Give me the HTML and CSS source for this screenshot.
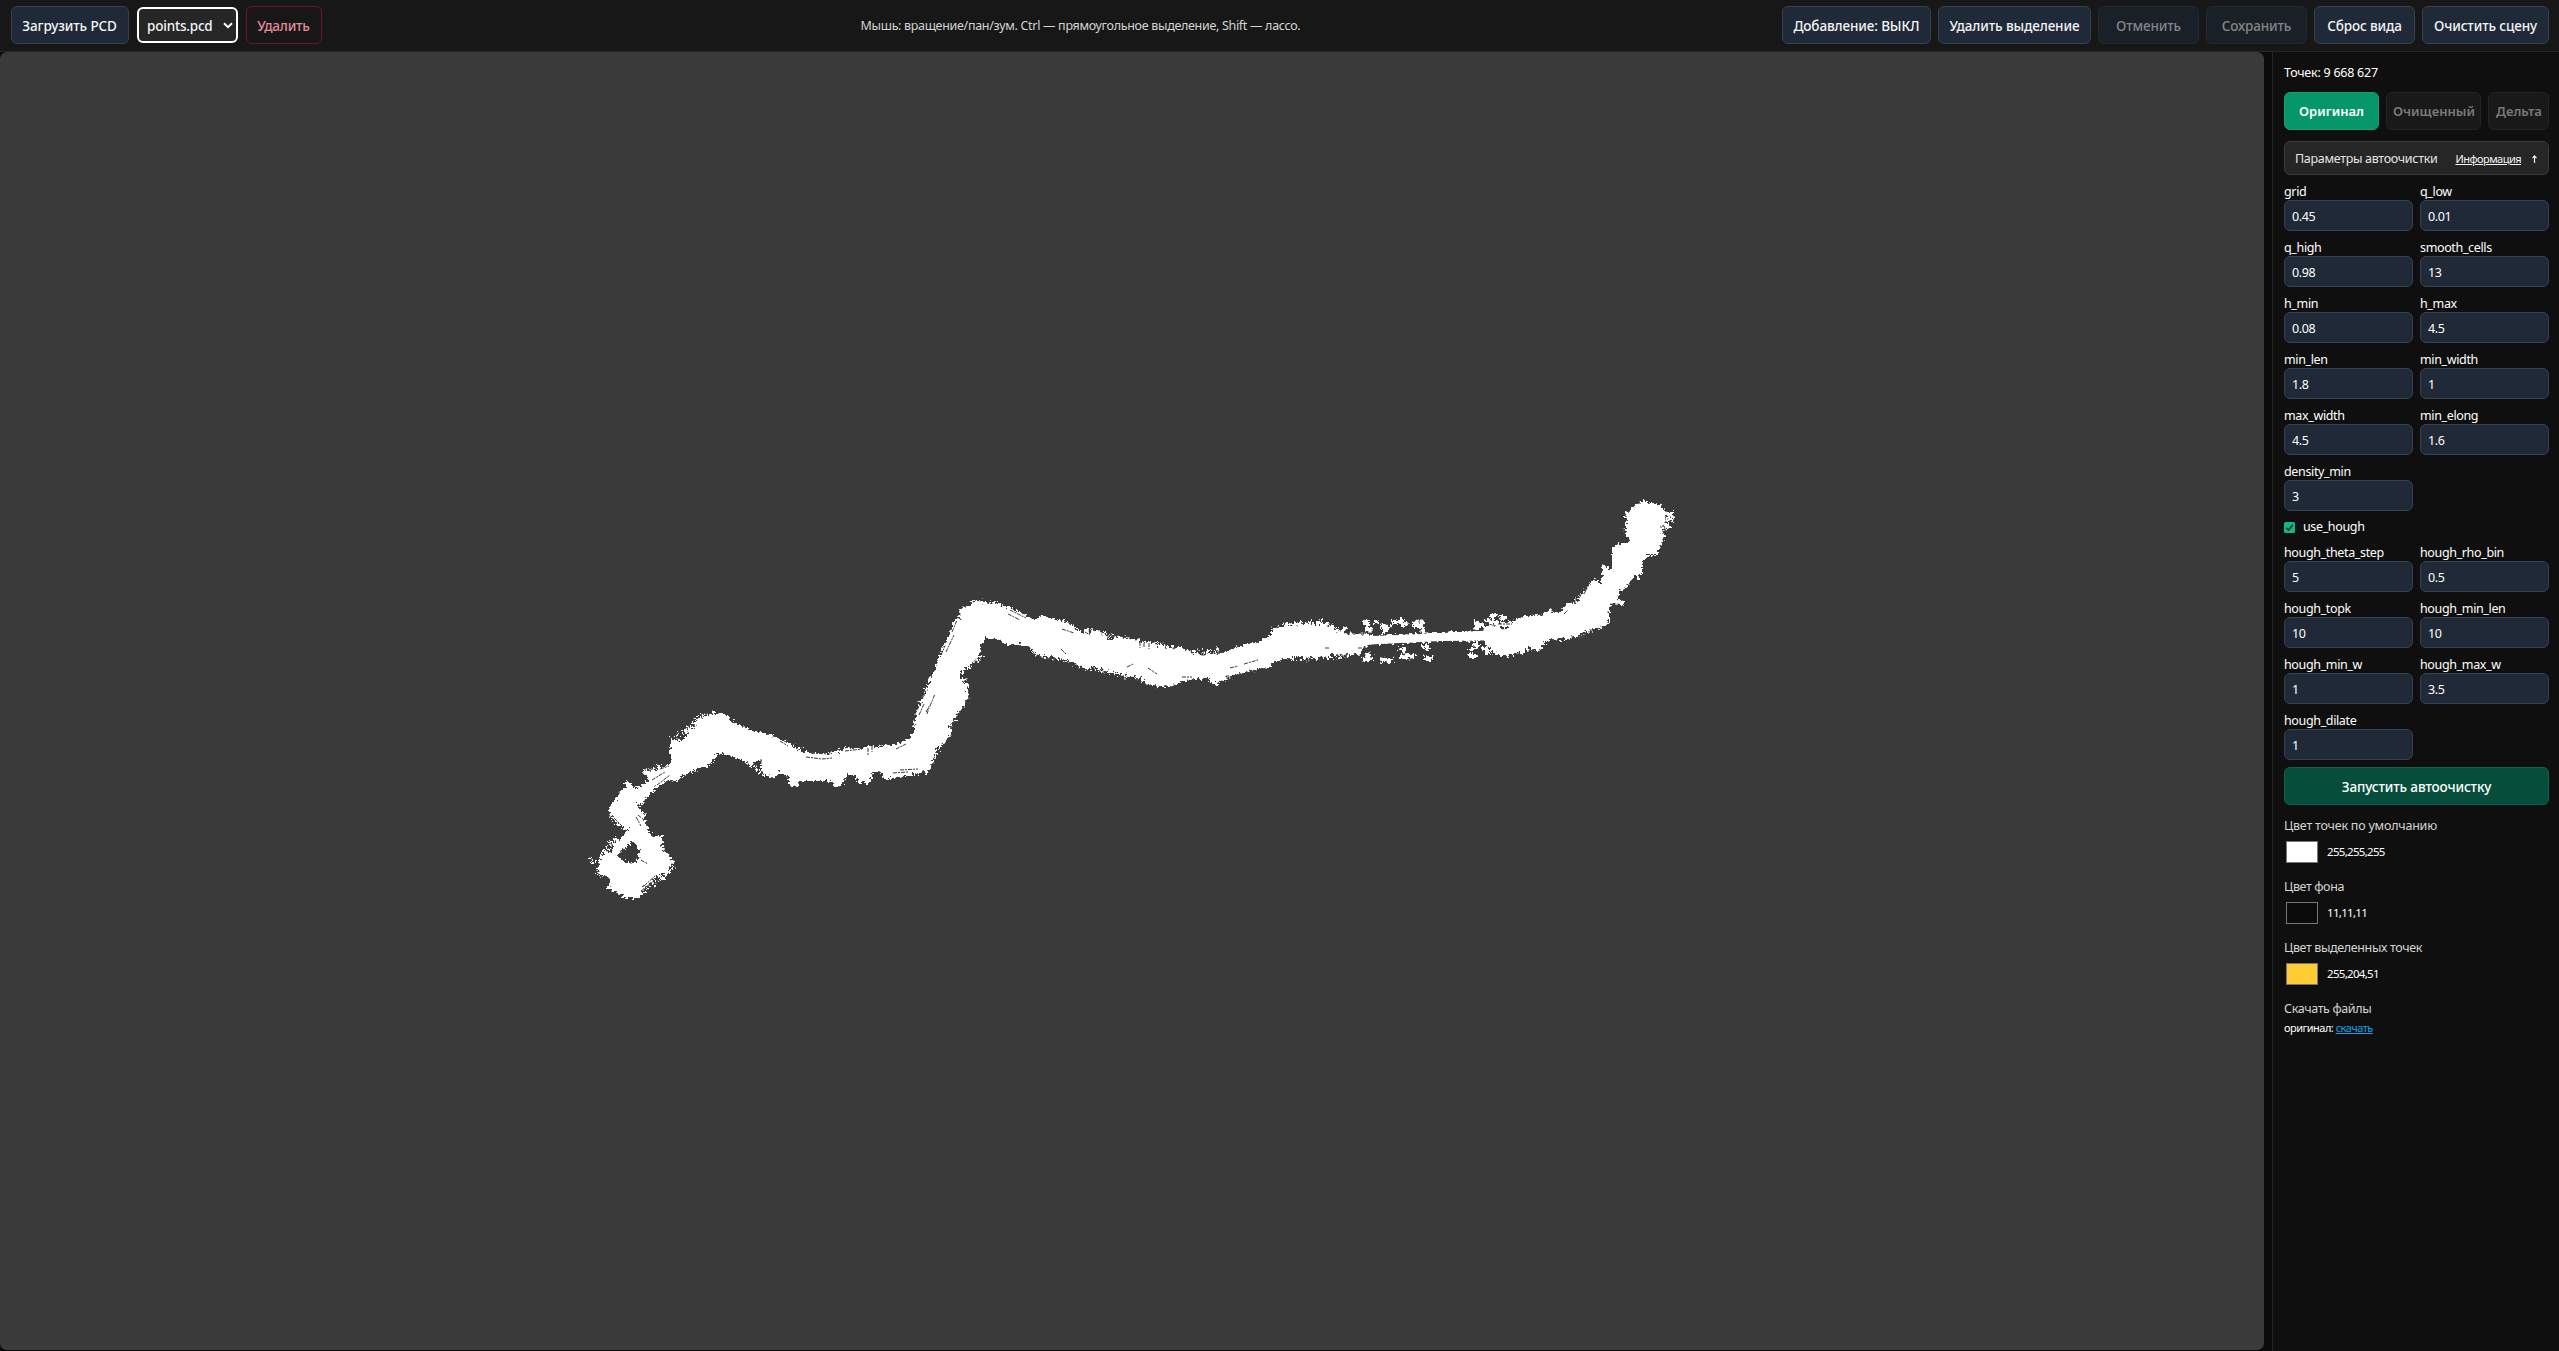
FILE: index.html
```html
<!DOCTYPE html>
<html lang="ru">
<head>
<meta charset="utf-8">
<title>PCD</title>
<link rel="stylesheet" href="styles.css">
</head>
<body>
<header class="topbar">
  <div class="group group-left">
    <button class="btn w-load">Загрузить PCD</button>
    <div class="select"><span>points.pcd</span><svg width="10" height="7" viewBox="0 0 10 7"><path d="M1 1.2 5 5.2 9 1.2" fill="none" stroke="#fff" stroke-width="2"/></svg></div>
    <button class="btn danger">Удалить</button>
  </div>
  <p class="hint">Мышь: вращение/пан/зум. Ctrl — прямоугольное выделение, Shift — лассо.</p>
  <div class="group">
    <button class="btn w-add">Добавление: ВЫКЛ</button>
    <button class="btn w-del">Удалить выделение</button>
    <button class="btn w-101 off">Отменить</button>
    <button class="btn w-101 off">Сохранить</button>
    <button class="btn w-101">Сброс вида</button>
    <button class="btn w-clear">Очистить сцену</button>
  </div>
</header>
<main class="main">
  <div class="viewport">
    <svg class="cloud" viewBox="0 52 2264 1297">
      <defs>
        <filter id="rough" filterUnits="userSpaceOnUse" x="560" y="480" width="1140" height="440">
          <feTurbulence type="fractalNoise" baseFrequency="0.32" numOctaves="2" seed="4" result="n"/>
          <feDisplacementMap in="SourceGraphic" in2="n" scale="8" xChannelSelector="R" yChannelSelector="G" result="d"/>
          <feComponentTransfer in="d"><feFuncA type="linear" slope="4" intercept="-1.5"/></feComponentTransfer>
        </filter>
      </defs>
      <g filter="url(#rough)">
        <g class="body" transform="translate(580 700) scale(.33333)">
          <path d="M55 480 75 462 95 455 100 435 110 420 100 408 118 418 145 388 130 384 112 375 100 350 86 345 90 320 105 300 120 275 135 262 133 245 155 245 158 262 185 258 205 238 190 222 195 210 215 212 240 205 268 195 275 180 270 155 275 118 300 122 318 110 325 88 345 78 350 55 380 52 400 40 440 45 450 60 470 68 500 85 540 100 555 100 580 110 610 120 640 142 665 155 720 160 780 155 800 142 850 147 870 140 900 140 950 132 975 125 1000 100 1015 60 1140 60 1105 70 1105 90 1085 130 1060 160 1060 185 1045 210 1020 218 960 230 920 238 905 218 880 215 872 248 835 250 825 225 800 225 790 250 770 262 750 242 660 242 650 260 630 258 622 230 600 215 585 235 555 225 545 205 545 185 530 182 515 200 500 185 450 168 415 155 400 182 370 200 345 210 310 225 295 243 265 240 230 262 205 290 185 315 165 300 180 330 195 350 200 380 220 410 245 410 245 445 270 470 278 490 268 515 235 525 215 545 190 560 185 585 160 600 120 585 80 562 95 545 75 525 60 530ZM158 422 135 445 108 466 135 484 165 492 182 455Z"/>
          <path class="fringe" d="M275 118 325 88 350 55 400 42 450 55M555 102 640 140 670 160M780 155 860 146 900 148 960 138M300 228 400 182M500 190 560 228M630 240 640 260M770 244 775 262M910 230 1045 205 1062 165 1110 90M90 320 100 360 130 384M105 415 70 460 50 520M235 405 245 450 280 490 268 515 190 575M190 215 265 196M165 300 190 350M33 475 40 495"/>
        </g>
        <g class="body" transform="translate(900 580) scale(.33333)">
          <path d="M0 490 25 478 40 455 50 400 60 370 85 320 90 290 105 270 120 225 150 160 165 118 178 118 178 92 205 78 215 68 235 62 260 70 295 72 320 80 350 92 380 108 405 118 430 107 470 118 500 128 530 150 550 160 560 140 570 160 590 150 610 165 635 180 655 168 700 180 750 190 800 200 850 205 870 220 940 228 960 220 1030 198 1100 178 1120 150 1140 145 1140 235 1110 250 1080 265 1000 280 965 300 935 312 925 290 870 300 805 320 745 312 720 290 650 280 590 260 560 265 520 250 490 235 440 230 410 222 395 205 370 190 320 195 300 178 260 172 240 200 240 230 210 250 185 270 185 298 205 320 195 370 170 400 150 430 145 470 125 490 105 500 95 545 80 570 0 585Z"/>
          <path class="fringe" d="M50 405 85 320 165 130M180 92 235 65 300 74M300 180 380 190 410 222 490 236 560 262 650 282 720 292 745 312 810 318M935 300 945 308 1000 284 1110 252M500 130 540 155 600 155 650 172 720 186 800 200 880 215 960 212M230 195 240 230 190 270M190 300 205 330 190 375 150 420 145 465 125 495M100 530 80 572 20 580"/>
        </g>
        <g class="body" transform="translate(1200 590) scale(.33333)">
          <path d="M0 195 60 190 130 165 205 145 220 118 260 105 300 100 350 105 375 97 410 120 440 130 500 130 520 138 675 130 855 122 930 118 935 95 955 95 980 80 1020 90 1080 70 1080 150 1045 145 1015 180 985 170 950 190 910 195 880 185 860 165 850 150 680 155 510 163 490 175 480 190 400 195 350 205 300 200 225 208 210 230 150 240 90 258 40 282 20 260 0 270Z"/>
          <path class="fringe" d="M215 120 260 104 375 98 420 120M230 205 350 204 480 190M930 100 980 82 1080 74M860 170 910 192 960 185 1040 150"/>
          <path class="bits" d="M490 98 510 100M492 118 520 118M520 96 535 92M540 106 572 112M545 122 568 122M575 98 590 94M600 106 625 100M598 94 612 92M635 98 672 98M645 110 670 108M668 112 672 128M596 178 618 182M600 200 645 198M665 165 692 178M672 202 698 206M500 190 510 205M490 206 522 206M540 208 578 212M825 95 840 108M828 112 850 102M828 90 830 118M855 92 895 98M870 82 890 76M898 76 920 86M890 105 930 104M850 114 900 112M805 180 822 176M805 198 835 198M820 160 835 168M850 172 868 192M425 122 440 110M1040 66 1055 64"/>
        </g>
        <g class="body" transform="translate(1440 490) scale(.33333)">
          <path d="M200 420 235 385 300 378 360 370 380 345 415 335 425 310 445 295 460 265 485 285 485 222 515 240 515 175 535 158 575 158 555 125 560 100 560 70 590 45 610 33 660 45 675 70 665 115 670 150 650 195 620 200 605 225 605 250 580 260 560 290 545 300 530 320 545 340 520 340 505 360 508 400 490 410 430 425 380 445 340 445 305 460 300 480 280 465 235 485 200 490 160 490 140 455Z"/>
          <path class="fringe" d="M235 390 360 372 425 318 465 270M560 130 562 72 610 38 665 55 675 90 668 160M485 405 430 428 370 450M300 470 230 484"/>
          <path class="bits" d="M675 70 700 74M682 88 700 90M668 100 695 112M600 255 590 260M540 335 550 340"/>
        </g>
      </g>
      <path class="road" d="M1345 637 1425 634 1480 631 1520 628 1520 640 1440 641 1360 645Z"/>
      <g class="gaps">
        <path d="M806 757 822 759 832 758M811 753 830 754M845 751 862 749M893 773 908 772M900 770 918 769M641 891 655 880M644 886 656 875M646 892 660 878M652 780 665 772M657 785 670 775M660 769 669 766M641 860 648 864M636 817 641 826M638 815 644 820M614 818 622 826M914 717 919 706 923 702M896 749 906 744M868 748v8M872 746v6M777 737 786 742M780 741 788 746"/>
        <path d="M952 632 957 620M946 652 954 635M936 658 943 643M941 655 945 646M1010 610 1026 618M1008 614 1020 620M1182 677 1192 677M1230 668 1238 666M1244 664 1258 660M930 706 935 694M926 712 930 705M919 715 924 704M927 714 929 708M1062 629 1074 633M1106 677 1116 680M1127 667 1133 664M1085 632 1090 635"/>
        <path d="M1646 554.500 1656 554.500M1061 649 1066 654M1148 668 1157 674M1140 642v6M1144 643v5M1149 643v6M1365 646v5M1358 648h6M1325 648h4M1498 624h14M1564 614 1568 610M1584 594 1588 586"/>
      </g>
    </svg>
  </div>
  <aside class="sidebar">
    <div class="count">Точек: 9 668 627</div>
    <div class="tabs">
      <button class="tab active">Оригинал</button><button class="tab">Очищенный</button><button class="tab">Дельта</button>
    </div>
    <div class="params-head"><span class="params-title">Параметры автоочистки</span><a class="info">Информация</a><svg width="5" height="8" viewBox="0 0 5 8"><path d="M2.500 8V1.500M.5 3.200 2.500 1l2 2.200" fill="none" stroke="#eee" stroke-width="1.200"/></svg></div>
    <div class="grid">
      <label>grid<input value="0.45"></label><label>q_low<input value="0.01"></label>
      <label>q_high<input value="0.98"></label><label>smooth_cells<input value="13"></label>
      <label>h_min<input value="0.08"></label><label>h_max<input value="4.5"></label>
      <label>min_len<input value="1.8"></label><label>min_width<input value="1"></label>
      <label>max_width<input value="4.5"></label><label>min_elong<input value="1.6"></label>
      <label>density_min<input value="3"></label>
    </div>
    <div class="check"><svg width="11" height="11" viewBox="0 0 11 11"><rect width="11" height="11" rx="1.500" fill="#10b981"/><path d="M2.200 5.800 4.500 8 8.800 2.800" fill="none" stroke="#26332e" stroke-width="1.700"/></svg><span>use_hough</span></div>
    <div class="grid">
      <label>hough_theta_step<input value="5"></label><label>hough_rho_bin<input value="0.5"></label>
      <label>hough_topk<input value="10"></label><label>hough_min_len<input value="10"></label>
      <label>hough_min_w<input value="1"></label><label>hough_max_w<input value="3.5"></label>
      <label>hough_dilate<input value="1"></label>
    </div>
    <button class="btn run">Запустить автоочистку</button>
    <section class="color"><h3 class="t-default">Цвет точек по умолчанию</h3><div class="swatch-row"><i class="swatch white"></i>255,255,255</div></section>
    <section class="color"><h3>Цвет фона</h3><div class="swatch-row"><i class="swatch black"></i>11,11,11</div></section>
    <section class="color"><h3>Цвет выделенных точек</h3><div class="swatch-row"><i class="swatch yellow"></i>255,204,51</div></section>
    <section class="files"><h3>Скачать файлы</h3><div class="file">оригинал: <a>скачать</a></div></section>
  </aside>
</main>
</body>
</html>
```
FILE: styles.css
```css
* { box-sizing: border-box; }
body {
  margin: 0;
  height: 1351px;
  overflow: hidden;
  display: flex;
  flex-direction: column;
  background: #0b0b0b;
  color: #fff;
  font: 12.5px/16px "Noto Sans", "Open Sans", sans-serif;
  letter-spacing: -.36px;
}
button, input { font: inherit; letter-spacing: inherit; color: inherit; margin: 0; }

.topbar {
  height: 52px;
  flex: none;
  display: flex;
  justify-content: space-between;
  align-items: flex-start;
  padding: 6px 10px 0 11px;
  background: #171717;
  border-bottom: 1px solid #262626;
}
.group { display: flex; gap: 7px; }
.group-left { gap: 8px; }
.btn {
  height: 38px;
  padding: 1px 0 0;
  border: 1px solid #374151;
  border-radius: 6px;
  background: #1f2937;
  color: #f3f4f6;
  font-size: 13.5px;
  font-weight: 500;
  letter-spacing: -.12px;
  text-align: center;
  white-space: nowrap;
}
.w-load { width: 118px; padding-right: 1px; }
.w-add { width: 149px; }
.w-del { width: 153px; }
.w-101 { width: 101px; }
.w-clear { width: 127px; }
.off { background: #1a2027; border-color: #23292f; color: #858585; }
.danger { width: 76px; padding-right: 1px; background: #171717; border-color: #6d1530; color: #e58b98; letter-spacing: -.2px; }
.select {
  width: 101px;
  height: 36px;
  margin-top: 1px;
  padding: 1px 3px 0 8px;
  display: flex;
  align-items: center;
  justify-content: space-between;
  background: #262626;
  border: 2px solid #fff;
  border-radius: 6px;
  color: #f3f4f6;
  font-size: 13.5px;
  font-weight: 500;
  letter-spacing: -.2px;
}
.hint { margin: 12px 0 0 57px; color: #d4d4d4; letter-spacing: -.31px; white-space: nowrap; }

.main { flex: 1; display: flex; min-height: 0; gap: 8px; }
.viewport { width: 2264px; height: 1298px; background: #3a3a3a; border-radius: 7px; overflow: hidden; }
.cloud { display: block; width: 2264px; height: 1297px; }
.body { fill: #fff; fill-rule: evenodd; }
.fringe { fill: none; stroke: #fff; stroke-width: 15; stroke-dasharray: 4 7 6 6 3 9; }
.bits { fill: none; stroke: #fff; stroke-width: 13; }
.road { fill: #fff; }
.gaps { fill: none; stroke: #3a3a3a; stroke-width: 1; stroke-dasharray: 4 1 2 1; }

.sidebar { width: 287px; padding: 12px 10px 0 11px; background: #0f0f0f; border-left: 1px solid #262626; }
.count { height: 28px; line-height: 18px; letter-spacing: -.25px; }
.tabs { display: grid; grid-template-columns: 95px 95px 61px; gap: 7px; height: 38px; }
.tab {
  padding: 0;
  border: 1px solid #242424;
  border-radius: 6px;
  background: #191919;
  color: #7a7a7a;
  font-size: 13px;
  font-weight: 600;
  letter-spacing: 0;
}
.tab + .tab { padding-left: 1px; }
.tab.active { background: #059669; border-color: #13a174; color: #fff; }
.params-head {
  height: 34px;
  margin-top: 11px;
  padding: 1px 11px 0 10px;
  display: flex;
  align-items: center;
  background: #262626;
  border: 1px solid #3a3a3a;
  border-radius: 6px;
  color: #e5e5e5;
}
.params-title { flex: 1; letter-spacing: -.31px; }
.info { margin-right: 11px; font-size: 11px; letter-spacing: -.53px; color: #f5f5f5; text-decoration: underline; }
.grid { display: grid; grid-template-columns: 129px 129px; gap: 9px 7px; margin-top: 9px; }
.grid label { display: block; height: 47px; line-height: 16px; }
.grid input {
  display: block;
  width: 100%;
  height: 31px;
  padding: 2px 7px 0;
  border: 1px solid #374151;
  border-radius: 6px;
  background: #1f2937;
  outline: none;
}
.check { height: 16px; margin: 8px 0 10px; display: flex; align-items: center; gap: 8px; }
.run { display: block; width: 265px; margin-top: 7px; background: #064e3b; border-color: #10644a; color: #fff; }
h3 { margin: 0; font-size: 12.5px; font-weight: 400; line-height: 16px; color: #d4d4d4; letter-spacing: -.37px; }
.t-default { letter-spacing: -.22px; }
.color { height: 61px; padding-top: 13px; }
.swatch-row { display: flex; align-items: center; height: 22px; margin-top: 7px; font-size: 11.5px; letter-spacing: -.7px; }
.swatch { width: 32px; height: 22px; margin: 0 9px 0 2px; border: 1px solid #767676; }
.white { background: #fff; }
.black { background: #0b0b0b; }
.yellow { background: #ffcc33; }
.files { padding-top: 13px; }
.file { margin-top: 3px; font-size: 11px; letter-spacing: -.52px; }
.file a { color: #0ea5e9; text-decoration: underline; }
```
